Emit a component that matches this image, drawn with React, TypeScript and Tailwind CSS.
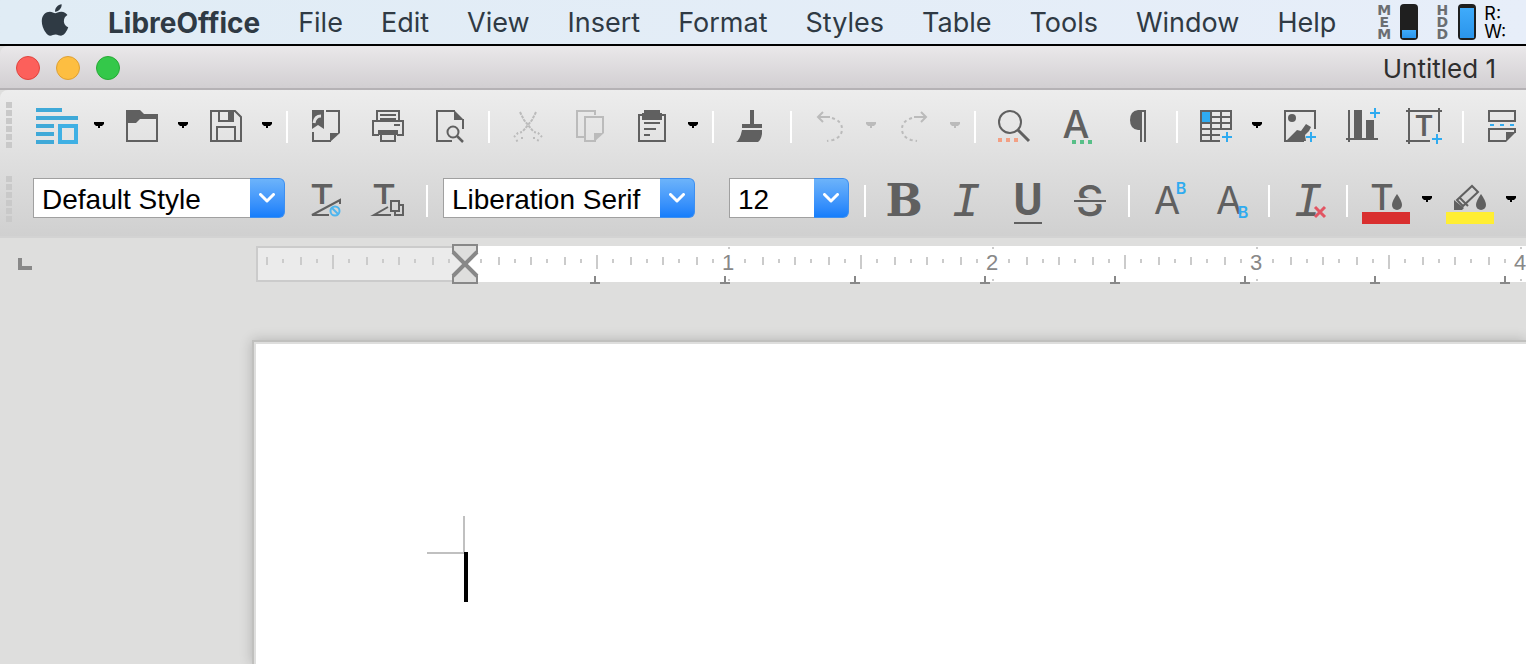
import type { ReactNode } from 'react';
import { FaApple } from 'react-icons/fa';

const DARK = '#606060';
const BLUE = '#2fabf0';

const MENUS = ['File', 'Edit', 'View', 'Insert', 'Format', 'Styles', 'Table', 'Tools', 'Window', 'Help'];

const Icon = ({ children }: { children: ReactNode }) => (
  <svg viewBox="0 0 32 32" className="size-8 overflow-visible" fill="none" stroke={DARK} strokeWidth="2" aria-hidden="true">
    {children}
  </svg>
);

const Plus = ({ x, y }: { x: number; y: number }) => (
  <path d={`M${x - 5} ${y}h10M${x} ${y - 5}v10`} stroke={BLUE} />
);

type LetterProps = {
  x: number;
  y: number;
  size: number;
  weight?: number;
  family?: string;
  fill?: string;
  italic?: boolean;
  clip?: string;
  children: string;
};

const Letter = ({ x, y, size, weight = 400, family = 'Inter', fill = DARK, italic, clip, children }: LetterProps) => (
  <text
    x={x}
    y={y}
    fontSize={size}
    fontWeight={weight}
    fontFamily={`"${family}", sans-serif`}
    fontStyle={italic ? 'italic' : 'normal'}
    textAnchor="middle"
    fill={fill}
    stroke="none"
    clipPath={clip}
  >
    {children}
  </text>
);

const icons: Record<string, ReactNode> = {
  New: (
    <>
      <path d="M-6 0h26M-6 8h42M-6 16h18M-6 24h18M-6 32h18" stroke="#3fa9d8" strokeWidth="4" />
      <rect x="18" y="16" width="16" height="16" stroke="#3fb0e4" strokeWidth="4" />
    </>
  ),
  Open: (
    <>
      <path d="M1 1v30h30V5" />
      <path d="M0 0h14l4 4h14v5H14l-4 4H0z" fill={DARK} stroke="none" />
    </>
  ),
  Save: (
    <>
      <path d="M1 1h24l6 6v24H1z" />
      <path d="M9 1v10h14V1M7 31V17h18v14" />
      <path d="M18 1h6v11h-6z" fill={DARK} stroke="none" />
    </>
  ),
  Templates: (
    <>
      <path d="M2 0h12v19l-6-4-6 4z" fill={DARK} stroke="none" />
      <path d="M4 13q1-7 7-7" stroke="#e4e4e4" strokeWidth="3" />
      <path d="M16 1h13v22M3 22v9h18" />
      <path d="M20 32V23h10z" fill={DARK} stroke="none" />
    </>
  ),
  Print: (
    <>
      <path d="M5 10V1h22v9M8 5h16M8 9h16M7 25H1V11h30v14h-6M22 15h6" />
      <path d="M6 20h20v5H6z" fill={DARK} stroke="none" />
      <path d="M9 24v7h14v-7" />
    </>
  ),
  'Print Preview': (
    <>
      <path d="M18 31H3V1h18M29 9v10" />
      <path d="M20 0l10 10H20z" fill={DARK} stroke="none" />
      <circle cx="19" cy="22" r="5.5" />
      <path d="M23 26l6 6" strokeWidth="2.5" />
    </>
  ),
  Cut: (
    <g stroke="#bbbbbb" strokeDasharray="3 1">
      <path d="M8 2l4 8 4 5 5 6M24 2l-4 8-4 5-5 6" />
      <path d="M10 22l-4 1-4 4M22 22l4 1 4 4M4 31l3-1M25 30l3 1M10 27v3M22 27v3" strokeDasharray="2 2" />
    </g>
  ),
  Copy: (
    <g stroke="#bbbbbb">
      <path d="M10 27H3V1h18v4" />
      <path d="M22 31H11V7h18v16" />
      <path d="M20 32V23h10z" fill="#bbbbbb" stroke="none" />
    </g>
  ),
  Paste: (
    <>
      <path d="M3 5h26v26H3z" />
      <path d="M8 0h16v3h2v7H6V3h2z" fill={DARK} stroke="none" />
      <path d="M8 13h16M8 19h12M8 25h6" />
    </>
  ),
  'Clone Formatting': (
    <path d="M14 0h4v14h8v4H6v-4h8zM6 20h20v4q-1 6-4 8H0q4-2 6-12z" fill={DARK} stroke="none" />
  ),
  Undo: (
    <g stroke="#bbbbbb">
      <path d="M5 7h11M9 2L4 7l5 5" />
      <path d="M18 8q10 3 10 11t-9 11l-6 1" strokeDasharray="3 3" />
    </g>
  ),
  Redo: (
    <g stroke="#bbbbbb">
      <path d="M27 7H16M23 2l5 5-5 5" />
      <path d="M14 8Q4 11 4 19t9 11l6 1" strokeDasharray="3 3" />
    </g>
  ),
  Find: (
    <>
      <circle cx="12" cy="12" r="11" />
      <path d="M20 20l11 11" strokeWidth="3" />
      <path d="M0 30h4m4 0h4m4 0h4" stroke="#f3a084" strokeWidth="4" />
    </>
  ),
  Spelling: (
    <>
      <Letter x={16} y={28} size={38} weight={500}>A</Letter>
      <path d="M12 32h4m4 0h4m4 0h4" stroke="#58bf88" strokeWidth="4" />
    </>
  ),
  'Formatting Marks': (
    <path d="M24 0v32h-2V2h-2v30h-2V20h-2Q8 19 8 10T16 0z" fill={DARK} stroke="none" />
  ),
  'Insert Table': (
    <>
      <path d="M20 31H1V1h30v18H1M11 1v30M21 1v18M11 7h20M1 13h30M1 25h19" />
      <path d="M2 2h8v10H2z" fill={BLUE} stroke="none" />
      <Plus x={27} y={27} />
    </>
  ),
  'Insert Image': (
    <>
      <path d="M20 31H1V1h30v18" />
      <circle cx="8" cy="8" r="4" fill={DARK} stroke="none" />
      <path d="M2 31L13 20l4 1 5-7 5 3-2 4-4 4 1 6z" fill={DARK} stroke="none" />
      <Plus x={27} y={27} />
    </>
  ),
  'Insert Chart': (
    <>
      <path d="M3 0v32M0 29h32" />
      <path d="M8 0h8v28H8zM20 10h8v18h-8z" fill={DARK} stroke="none" />
      <Plus x={29} y={3} />
    </>
  ),
  'Insert Text Box': (
    <>
      <path d="M-2 1h36M1-2v36M31-2v24M-2 31h24" />
      <Letter x={16} y={26} size={28} weight={600}>T</Letter>
      <Plus x={29} y={29} />
    </>
  ),
  'Page Break': (
    <>
      <path d="M3 1h26v10H3zM20 31H3V19h26v4" />
      <path d="M20 32V22h10z" fill={DARK} stroke="none" />
      <path d="M4 15h4m6 0h4m6 0h4" stroke={BLUE} />
    </>
  ),
  'Update Style': (
    <>
      <clipPath id="upper"><path d="M-4-4h32v24H-4z" /></clipPath>
      <Letter x={12} y={26} size={36} weight={500} clip="url(#upper)">T</Letter>
      <path d="M19 31H2l28-15v4" />
      <circle cx="25" cy="27" r="4.5" stroke="#4db5ee" />
      <path d="M22 24l6 6" stroke="#4db5ee" />
    </>
  ),
  'New Style': (
    <>
      <Letter x={12} y={26} size={36} weight={500} clip="url(#upper)">T</Letter>
      <path d="M19 31H2l14-8" />
      <path d="M19 17h8v10h-8zM28 21h3v10h-8v-3" />
    </>
  ),
  Bold: <Letter x={16} y={32} size={44} weight={700} family="DejaVu Serif">B</Letter>,
  Italic: <Letter x={16} y={32} size={48} family="Liberation Mono" italic>I</Letter>,
  Underline: (
    <>
      <Letter x={16} y={31} size={44} weight={700} family="Roboto">U</Letter>
      <path d="M2 39h28" />
    </>
  ),
  Strikethrough: (
    <>
      <clipPath id="halves"><path d="M0-4h32v18H0zM0 20h32v16H0z" /></clipPath>
      <Letter x={16} y={32} size={43} weight={500} clip="url(#halves)">S</Letter>
      <path d="M0 17h32" />
    </>
  ),
  Superscript: (
    <>
      <Letter x={15} y={30} size={38}>A</Letter>
      <Letter x={29} y={10} size={16} weight={600} fill={BLUE}>B</Letter>
    </>
  ),
  Subscript: (
    <>
      <Letter x={15} y={30} size={38}>A</Letter>
      <Letter x={29} y={34} size={16} weight={600} fill={BLUE}>B</Letter>
    </>
  ),
  'Clear Formatting': (
    <>
      <Letter x={16} y={32} size={48} family="Liberation Mono" italic>I</Letter>
      <path d="M23 23l10 10M33 23L23 33" stroke="#e25563" strokeWidth="3" />
    </>
  ),
  'Font Color': (
    <>
      <Letter x={12} y={26} size={36} weight={500}>T</Letter>
      <path d="M27 10q5 7 5 11a5 5 0 01-10 0q0-4 5-11z" fill={DARK} stroke="none" />
      <path d="M-8 28h48v12H-8z" fill="#d92f2f" stroke="none" />
    </>
  ),
  Highlighting: (
    <>
      <path d="M3 16L18 2l6 6L9 22zM5 13l9 9" />
      <path d="M0 26V16l10 8-2 2z" fill={DARK} stroke="none" />
      <path d="M27 10q5 7 5 11a5 5 0 01-10 0q0-4 5-11z" fill={DARK} stroke="none" />
      <path d="M-8 28h48v12H-8z" fill="#ffee33" stroke="none" />
    </>
  ),
};

const Tool = ({ name, disabled }: { name: string; disabled?: boolean }) => (
  <button aria-label={name} disabled={disabled} className="flex w-[62px] shrink-0 justify-center">
    <Icon>{icons[name]}</Icon>
  </button>
);

const DropTool = ({ name, disabled }: { name: string; disabled?: boolean }) => (
  <div className="flex w-21 shrink-0 items-center">
    <Tool name={name} disabled={disabled} />
    <button aria-label={`${name} options`} disabled={disabled} className="pb-0.5 pl-[5px]">
      <svg viewBox="0 0 10 6" className="block h-1.5 w-2.5" fill={disabled ? '#bbbbbb' : '#000'} aria-hidden="true">
        <path d="M0 0h10v2L8 4H6v2H4V4H2L0 2z" />
      </svg>
    </button>
  </div>
);

const Separator = () => <div className="mx-[7px] mt-0.5 h-8 w-0.5 shrink-0 bg-white" />;

const Handle = () => (
  <div className="flex w-[27px] shrink-0 flex-col gap-0.5 pb-0.5 pl-1.5">
    {[0, 1, 2, 3, 4, 5].map((i) => (
      <div key={i} className="size-1.5 bg-[#c9c9c9]" />
    ))}
  </div>
);

const Combo = ({ label, value, width }: { label: string; value: string; width: string }) => (
  <div className={`flex h-10 shrink-0 ${width}`}>
    <input
      aria-label={label}
      defaultValue={value}
      className="min-w-0 flex-1 border border-r-0 border-[#a0a0a0] bg-white pt-1 pl-2 font-['Liberation_Sans',sans-serif] text-[28px] leading-8 text-black outline-none"
    />
    <button
      aria-label={`${label} list`}
      className="flex w-[35px] items-center justify-center rounded-r-md border border-l-0 border-[#3d8ff0] bg-linear-to-b from-[#6cb3fa] to-[#157efb]"
    >
      <svg viewBox="0 0 16 10" className="h-2.5 w-4" fill="none" stroke="#fff" strokeWidth="3" aria-hidden="true">
        <path d="M1.500 1.500L8 8l6.500-6.500" strokeLinecap="round" strokeLinejoin="round" />
      </svg>
    </button>
  </div>
);

const Gauge = ({ label, fill }: { label: string; fill: string }) => (
  <div className="flex shrink-0 items-center gap-2">
    <div className="flex w-4 flex-col items-center font-['DejaVu_Sans',sans-serif] text-sm leading-3 font-bold text-[#6b6e72]">
      {label.split('').map((c, i) => (
        <span key={i}>{c}</span>
      ))}
    </div>
    <div className="flex h-9 w-[18px] flex-col justify-end rounded-sm bg-[#1f1f1f] p-0.5">
      <div className={`bg-linear-to-b from-[#3fabfb] to-[#2a95ec] ${fill}`} />
    </div>
  </div>
);

const MenuBar = () => (
  <nav className="flex h-[46px] items-center overflow-hidden border-b-2 border-black bg-linear-to-r from-[#e0ecf5] to-[#e7eef9] pt-0.5 pl-[41px] text-[27px] leading-8 whitespace-nowrap text-[#2f3a44]">
    <button aria-label="Apple menu" className="mr-[39px] shrink-0">
      <FaApple className="mb-1.5 h-9 w-7" />
    </button>
    <div className="flex shrink-0 items-center gap-[38px]">
      <button className="text-[28px] font-bold">LibreOffice</button>
      {MENUS.map((m) => (
        <button key={m}>{m}</button>
      ))}
    </div>
    <div className="mb-0.5 ml-10 flex shrink-0 items-center gap-4">
      <Gauge label="MEM" fill="h-2" />
      <Gauge label="HDD" fill="h-[30px]" />
    </div>
    <div className="ml-2 shrink-0 text-lg leading-[18px] text-black">
      <div>R:</div>
      <div>W:</div>
    </div>
  </nav>
);

const TitleBar = () => (
  <header className="flex h-11 items-center justify-between rounded-tl-lg border-b-2 border-[#b5b2b5] bg-linear-to-b from-[#eae8ea] to-[#d2cfd2] pr-[30px] pl-4">
    <div className="flex gap-4 pt-0.5">
      <button aria-label="Close" className="size-6 rounded-full border border-[#e0443e] bg-[#fc605b]" />
      <button aria-label="Minimize" className="size-6 rounded-full border border-[#dea034] bg-[#fdbe41]" />
      <button aria-label="Zoom" className="size-6 rounded-full border border-[#27aa35] bg-[#34c84a]" />
    </div>
    <h1 className="pt-1 text-[26px] leading-8 text-[#2f2f2f]">Untitled 1</h1>
  </header>
);

const ZERO = 208;

// 16 ticks to the inch, one inch is 264px
const Ruler = () => {
  const ticks = Array.from({ length: 77 }, (_, i) => i - 12).filter((k) => k !== 0);
  return (
    <svg className="h-10 min-w-0 flex-1" shapeRendering="crispEdges" role="img" aria-label="Ruler">
      <rect x={ZERO} y="2" width="100%" height="36" fill="#fff" />
      <rect x="1" y="3" width={ZERO} height="34" fill="#ebebeb" stroke="#cbcbcb" strokeWidth="2" />
      {ticks.map((k) => {
        const x = Math.floor((ZERO + k * 16.5 + 1) / 2) * 2;
        if (k % 16 === 0) {
          return (
            <g key={k}>
              <path d={`M${x + 1} 3v2M${x + 1} 35v2`} stroke="#cbcbcb" strokeWidth="2" />
              <text x={x} y="26" fontSize="22" textAnchor="middle" fill="#888" fontFamily='"Liberation Sans", sans-serif'>
                {k / 16}
              </text>
            </g>
          );
        }
        const h = k % 8 === 0 ? 14 : k % 2 === 0 ? 8 : 4;
        return <rect key={k} x={x} y={k % 8 === 0 ? 11 : 17 - h / 2} width="2" height={h} fill="#cbcbcb" />;
      })}
      {Array.from({ length: 8 }, (_, i) => ZERO + (i + 1) * 130).map((x) => (
        <path key={x} d={`M${x + 1} 32v6M${x - 4} 39h10`} stroke="#888" strokeWidth="2" />
      ))}
      <g fill="#dededd" stroke="#888" strokeWidth="2" shapeRendering="auto">
        <path d="M197 1h24v7l-12 12-12-12z" />
        <path d="M197 39h24v-7L209 20l-12 12z" />
        <path d="M197 8l24 24M221 8l-24 24" strokeWidth="4" />
      </g>
    </svg>
  );
};

const App = () => {
  return (
    <div className="flex min-h-screen flex-col overflow-hidden bg-[#dededd] font-['Inter',sans-serif]">
      <MenuBar />
      <TitleBar />

      <div className="rounded-tl-lg border-b-2 border-[#d3d3d3] bg-linear-to-b from-[#ededed] to-[#d0d0d0]">
        <div role="toolbar" aria-label="Standard" className="flex h-[72px] items-center overflow-hidden">
          <Handle />
          <DropTool name="New" />
          <DropTool name="Open" />
          <DropTool name="Save" />
          <Separator />
          <Tool name="Templates" />
          <Tool name="Print" />
          <Tool name="Print Preview" />
          <Separator />
          <Tool name="Cut" disabled />
          <Tool name="Copy" disabled />
          <DropTool name="Paste" />
          <Separator />
          <Tool name="Clone Formatting" />
          <Separator />
          <DropTool name="Undo" disabled />
          <DropTool name="Redo" disabled />
          <Separator />
          <Tool name="Find" />
          <Tool name="Spelling" />
          <Tool name="Formatting Marks" />
          <Separator />
          <DropTool name="Insert Table" />
          <Tool name="Insert Image" />
          <Tool name="Insert Chart" />
          <Tool name="Insert Text Box" />
          <Separator />
          <Tool name="Page Break" />
        </div>
        <div role="toolbar" aria-label="Formatting" className="flex h-[74px] items-center overflow-hidden pt-0.5">
          <Handle />
          <div className="flex shrink-0 items-center pr-2.5 pb-1 pl-1.5">
            <Combo label="Paragraph style" value="Default Style" width="w-[252px]" />
          </div>
          <Tool name="Update Style" />
          <Tool name="New Style" />
          <Separator />
          <div className="flex shrink-0 items-center gap-[34px] px-2 pb-1">
            <Combo label="Font name" value="Liberation Serif" width="w-[252px]" />
            <Combo label="Font size" value="12" width="w-[120px]" />
          </div>
          <Separator />
          <Tool name="Bold" />
          <Tool name="Italic" />
          <Tool name="Underline" />
          <Tool name="Strikethrough" />
          <Separator />
          <Tool name="Superscript" />
          <Tool name="Subscript" />
          <Separator />
          <Tool name="Clear Formatting" />
          <Separator />
          <DropTool name="Font Color" />
          <DropTool name="Highlighting" />
        </div>
      </div>

      <div className="flex pt-1.5">
        <button aria-label="Tab type" className="w-64 shrink-0 pl-[18px]">
          <div className="h-3 w-3.5 border-b-4 border-l-4 border-[#888]" />
        </button>
        <Ruler />
      </div>

      <main className="mt-14 ml-[252px] flex flex-1 border-t-2 border-l-2 border-[#c0c0be] shadow-[0_0_12px_rgba(0,0,0,0.2)]">
        <div className="flex-1 border-t-2 border-l-2 border-[#dededd] bg-white pt-[172px] pl-[171px]">
          <div className="h-[38px] w-[38px] border-r-2 border-b-2 border-[#c0c0c0]" />
          <div className="-mt-0.5 ml-[37px] h-[50px] w-1 bg-black" />
        </div>
      </main>
    </div>
  );
};

export default App;
